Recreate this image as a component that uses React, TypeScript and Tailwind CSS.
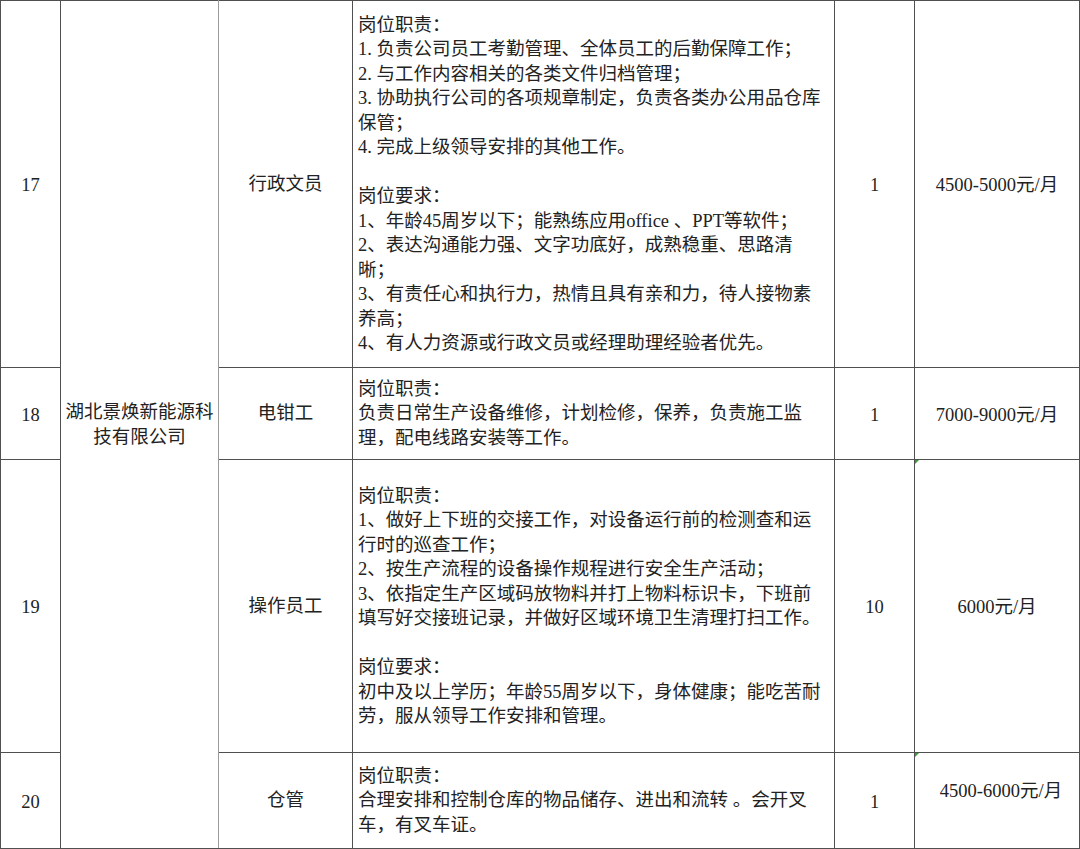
import React from "react";

interface Job {
  no: number;
  title: string;
  lines: string[];
  count: string;
  salary: string;
  height: string;
  salaryClass?: string;
}

const jobs: Job[] = [
  {
    no: 17,
    title: "行政文员",
    lines: [
      "岗位职责：",
      "1. 负责公司员工考勤管理、全体员工的后勤保障工作；",
      "2. 与工作内容相关的各类文件归档管理；",
      "3. 协助执行公司的各项规章制定，负责各类办公用品仓库",
      "保管；",
      "4. 完成上级领导安排的其他工作。",
      "",
      "岗位要求：",
      "1、年龄45周岁以下；能熟练应用office 、PPT等软件；",
      "2、表达沟通能力强、文字功底好，成熟稳重、思路清",
      "晰；",
      "3、有责任心和执行力，热情且具有亲和力，待人接物素",
      "养高；",
      "4、有人力资源或行政文员或经理助理经验者优先。",
    ],
    count: "1",
    salary: "4500-5000元/月",
    height: "h-[367px]",
  },
  {
    no: 18,
    title: "电钳工",
    lines: [
      "岗位职责：",
      "负责日常生产设备维修，计划检修，保养，负责施工监",
      "理，配电线路安装等工作。",
    ],
    count: "1",
    salary: "7000-9000元/月",
    height: "h-[92px]",
  },
  {
    no: 19,
    title: "操作员工",
    lines: [
      "岗位职责：",
      "1、做好上下班的交接工作，对设备运行前的检测查和运",
      "行时的巡查工作；",
      "2、按生产流程的设备操作规程进行安全生产活动；",
      "3、依指定生产区域码放物料并打上物料标识卡，下班前",
      "填写好交接班记录，并做好区域环境卫生清理打扫工作。",
      "",
      "岗位要求：",
      "初中及以上学历；年龄55周岁以下，身体健康；能吃苦耐",
      "劳，服从领导工作安排和管理。",
    ],
    count: "10",
    salary: "6000元/月",
    height: "h-[293px]",
  },
  {
    no: 20,
    title: "仓管",
    lines: [
      "岗位职责：",
      "合理安排和控制仓库的物品储存、进出和流转 。会开叉",
      "车，有叉车证。",
    ],
    count: "1",
    salary: "4500-6000元/月",
    height: "h-[96px]",
    salaryClass: "pb-[22px] pl-[8px]",
  },
];

const cell = "border border-[#505050] align-middle text-center p-0";

export default function App() {
  return (
    <div className="w-[1080px] h-[849px] bg-white overflow-hidden text-[#222222] text-[18.5px] leading-[24.5px] [font-family:'Liberation_Serif','Noto_Sans_CJK_SC',serif]">
      <table className="w-[1079px] table-fixed border-collapse">
        <colgroup>
          <col className="w-[60px]" />
          <col className="w-[158px]" />
          <col className="w-[134px]" />
          <col className="w-[482px]" />
          <col className="w-[80px]" />
          <col className="w-[165px]" />
        </colgroup>
        <tbody>
          {jobs.map((job, i) => (
            <tr key={job.no} className={job.height}>
              <td className={`${cell} pt-[3px]`}>{job.no}</td>
              {i === 0 && (
                <td rowSpan={4} className={`${cell} border-r-[#9a9a9a]`}>
                  湖北景焕新能源科
                  <br />
                  技有限公司
                </td>
              )}
              <td className={`${cell} border-l-[#9a9a9a]`}>{job.title}</td>
              <td className={`${cell} text-left pl-[5px]`}>
                {job.lines.map((line, k) =>
                  line ? (
                    <div key={k} className="whitespace-pre">
                      {line}
                    </div>
                  ) : (
                    <div key={k} className="h-[24.5px]" />
                  )
                )}
              </td>
              <td className={`${cell} pt-[3px]`}>{job.count}</td>
              <td className={`${cell} relative pt-[3px]`}>
                {/* little green corner mark, like the sheet's note flag */}
                {(i === 2 || i === 3) && (
                  <span className="absolute left-0 top-0 w-0 h-0 border-t-[4px] border-r-[4px] border-t-[#3a9a3a] border-r-transparent" />
                )}
                <div className={job.salaryClass}>{job.salary}</div>
              </td>
            </tr>
          ))}
        </tbody>
      </table>
    </div>
  );
}
